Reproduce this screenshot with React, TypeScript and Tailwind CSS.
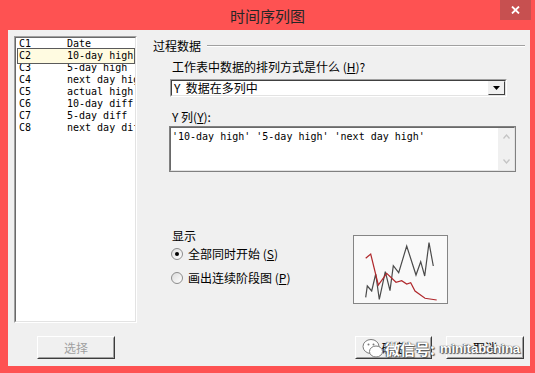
import React from "react";

const cjk = "font-['Noto_Sans_CJK_SC',sans-serif]";
const mono = "font-['DejaVu_Sans_Mono','Noto_Sans_CJK_SC',monospace]";

const columns = [
  ["C1", "Date"],
  ["C2", "10-day high"],
  ["C3", "5-day high"],
  ["C4", "next day high"],
  ["C5", "actual high"],
  ["C6", "10-day diff"],
  ["C7", "5-day diff"],
  ["C8", "next day diff"],
];

function Radio({ checked, label, hotkey }: { checked?: boolean; label: string; hotkey: string }) {
  return (
    <div className="flex items-center h-[12px] -ml-[1px]">
      <div className="w-[12px] h-[12px] rounded-full border border-[#8c8c8c] bg-gradient-to-br from-[#dcdcdc] to-white flex items-center justify-center">
        {checked && <div className="w-[4px] h-[4px] rounded-full bg-black" />}
      </div>
      <span className={`ml-[5px] text-[12px] leading-[12px] text-black ${cjk}`}>
        {label} (<span className="underline">{hotkey}</span>)
      </span>
    </div>
  );
}

function Button({ label, disabled, width }: { label: string; disabled?: boolean; width: string }) {
  return (
    <div className={`${width} h-[23px] border border-t-white border-l-white border-r-[#3c3c3c] border-b-[#3c3c3c]`}>
      <div className="w-full h-full border border-t-[#f0f0f0] border-l-[#f0f0f0] border-r-[#a0a0a0] border-b-[#a0a0a0] flex items-center justify-center">
        <span className={`text-[12px] leading-[12px] ${cjk} ${disabled ? "text-[#a0a0a0]" : "text-black"}`}>{label}</span>
      </div>
    </div>
  );
}

export default function App() {
  return (
    <div className="relative w-[535px] h-[373px] bg-[#fe5252] flex flex-col overflow-hidden">
      {/* title bar */}
      <div className="relative h-[30px] flex items-center justify-center">
        <span className={`text-[15px] leading-[15px] text-[#262626] ${cjk}`}>时间序列图</span>
        <div className="absolute right-[4px] top-0 w-[31px] h-[20px] bg-[#c75050] flex items-center justify-center">
          <svg width="9" height="8" viewBox="0 0 9 8">
            <path d="M1 0.5 L8 7.5 M8 0.5 L1 7.5" stroke="white" strokeWidth="1.8" />
          </svg>
        </div>
      </div>

      {/* client area */}
      <div className="ml-[8px] mr-[5px] mb-[7px] flex-1 bg-[#f0f0f0] flex flex-col pt-[6px] pl-[6px] pr-[5px] pb-[7px]">
        <div className="flex h-[287px]">
          {/* column list */}
          <div className="w-[123px] h-full border border-t-[#a0a0a0] border-l-[#a0a0a0] border-r-white border-b-white">
            <div className="w-full h-full border border-t-[#696969] border-l-[#696969] border-r-[#e3e3e3] border-b-[#e3e3e3] bg-white overflow-hidden">
              <div className="flex flex-col">
                {columns.map(([c, name], i) => (
                  <div key={c} className={`relative flex h-[12px] items-center ${i === 1 ? "z-10" : ""}`}>
                    {i === 1 && (
                      <div className="absolute left-[1px] right-[0px] -top-[2px] -bottom-[2px] bg-[#fffbe1] border border-[#5a5a5a]" />
                    )}
                    <span className={`relative shrink-0 w-[51px] pl-[3px] text-[10px] leading-[12px] text-black ${mono}`}>{c}</span>
                    <span className={`relative shrink-0 whitespace-nowrap text-[10px] leading-[12px] text-black ${mono}`}>{name}</span>
                  </div>
                ))}
              </div>
            </div>
          </div>

          {/* right panel */}
          <div className="ml-[16px] flex-1 flex flex-col">
            <div className="mt-[4px] h-[12px] flex items-center">
              <span className={`text-[12px] leading-[12px] text-black ${cjk}`}>过程数据</span>
              <div className="ml-[6px] flex-1 border-t border-t-[#a0a0a0] border-b border-b-white" />
            </div>

            <div className={`mt-[9px] ml-[19px] text-[12px] leading-[12px] text-black ${cjk}`}>
              工作表中数据的排列方式是什么 (<span className="underline">H</span>)?
            </div>

            <div className="mt-[6px] ml-[17px] w-[337px] h-[18px] border border-t-[#a0a0a0] border-l-[#a0a0a0] border-r-white border-b-white">
              <div className="w-full h-full border border-t-[#404040] border-l-[#404040] border-r-[#e3e3e3] border-b-[#e3e3e3] bg-white flex items-center">
                <span className={`ml-[2px] text-[12px] leading-[12px] text-black ${cjk}`}>Y&nbsp;&nbsp;数据在多列中</span>
                <div className="ml-auto w-[17px] h-full border border-t-[#f0f0f0] border-l-[#f0f0f0] border-r-[#404040] border-b-[#404040] bg-[#f0f0f0] flex items-center justify-center">
                  <svg width="7" height="4" viewBox="0 0 7 4">
                    <path d="M0 0 H7 L3.5 4 Z" fill="black" />
                  </svg>
                </div>
              </div>
            </div>

            <div className={`mt-[14px] ml-[19px] text-[12px] leading-[12px] text-black ${cjk}`}>
              Y 列(<span className="underline">Y</span>):
            </div>

            <div className="mt-[3px] ml-[16px] w-[347px] h-[46px] border border-[#808080]">
              <div className="w-full h-full border border-t-[#696969] border-l-[#696969] border-r-[#e3e3e3] border-b-[#e3e3e3] bg-white flex">
                <div className={`flex-1 pl-[1px] pt-[3px] text-[10px] leading-[12px] text-black whitespace-nowrap ${mono}`}>
                  '10-day high' '5-day high' 'next day high'
                </div>
                <div className="w-[16px] h-full bg-[#f0f0f0] flex flex-col items-center justify-between py-[6px]">
                  <svg width="7" height="5" viewBox="0 0 7 5">
                    <path d="M0.5 4.5 L3.5 1 L6.5 4.5" stroke="#c4c4c4" strokeWidth="1.3" fill="none" />
                  </svg>
                  <svg width="7" height="5" viewBox="0 0 7 5">
                    <path d="M0.5 0.5 L3.5 4 L6.5 0.5" stroke="#c4c4c4" strokeWidth="1.3" fill="none" />
                  </svg>
                </div>
              </div>
            </div>

            <div className="mt-[58px] ml-[19px] flex">
              <div className="w-[181px] flex flex-col">
                <span className={`text-[12px] leading-[12px] text-black ${cjk}`}>显示</span>
                <div className="mt-[6px]">
                  <Radio checked label="全部同时开始" hotkey="S" />
                </div>
                <div className="mt-[12px]">
                  <Radio label="画出连续阶段图" hotkey="P" />
                </div>
              </div>
              <div className="mt-[5px] w-[95px] h-[69px] border border-[#858585] bg-[#f9f9f9]">
                <svg className="w-full h-full" viewBox="1 1 93 67">
                  <polyline
                    points="12.7,62.3 14.3,51 18.7,56 22.7,39 26.3,64.3 32.3,36.7 37,55.7 40.3,30.7 45.7,37.7 53.7,11 63,40 67.7,26.7 71.7,41 76,7.7 80.3,31"
                    fill="none"
                    stroke="#4a4a4a"
                    strokeWidth="1.2"
                  />
                  <polyline
                    points="12.7,23.3 17.7,19 25.3,50 33.7,38.3 43,47.3 48.7,45.7 53.7,49 57.7,47.7 62,56 72,63.3 83.7,65"
                    fill="none"
                    stroke="#b0282c"
                    strokeWidth="1.2"
                  />
                </svg>
              </div>
            </div>
          </div>
        </div>

        {/* buttons */}
        <div className="mt-[13px] h-[23px] flex">
          <div className="ml-[23px]">
            <Button label="选择" disabled width="w-[78px]" />
          </div>
          <div className="ml-auto flex gap-[14px] mr-[1px]">
            <Button label="确定" width="w-[77px]" />
            <Button label="取消" width="w-[78px]" />
          </div>
        </div>
      </div>

      {/* watermark */}
      <div className="absolute left-[362px] top-[338px] flex items-center">
        <svg width="22" height="21" viewBox="0 0 22 21">
          <ellipse cx="9" cy="8.5" rx="8" ry="7" fill="white" stroke="#7a7a7a" strokeWidth="1" />
          <ellipse cx="14" cy="13.5" rx="6.5" ry="5.5" fill="white" stroke="#7a7a7a" strokeWidth="1" />
          <circle cx="6.5" cy="6.5" r="1" fill="#7a7a7a" />
          <circle cx="11.5" cy="6.5" r="1" fill="#7a7a7a" />
        </svg>
        <span
          className={`ml-[1px] text-[15px] leading-[15px] font-bold text-white [text-shadow:0_0_1px_#444,1px_1px_1px_#555,-1px_0_1px_#666] ${cjk}`}
        >
          微信号:
        </span>
        <span className="ml-[5px] text-[13px] leading-[13px] font-bold text-white [text-shadow:0_0_1px_#444,1px_1px_1px_#555,-1px_0_1px_#666] font-['Liberation_Sans',sans-serif]">
          minitabchina
        </span>
      </div>
    </div>
  );
}
